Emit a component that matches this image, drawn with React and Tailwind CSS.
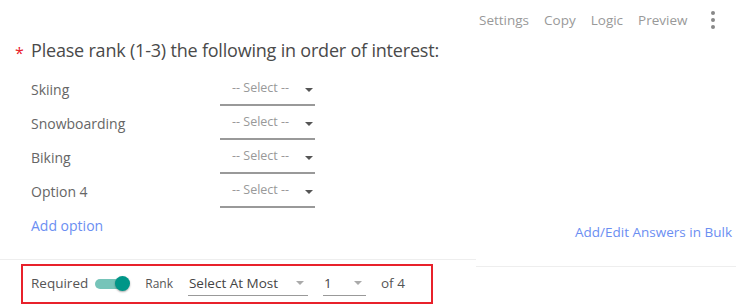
import React from "react";

const Caret = ({ cls = "border-t-[#555]" }) => (
  <span className={`inline-block w-0 h-0 border-l-[4px] border-r-[4px] border-t-[4px] border-l-transparent border-r-transparent ${cls}`} />
);

const options = ["Skiing", "Snowboarding", "Biking", "Option 4"];

export default function App() {
  return (
    <div
      className="w-[754px] h-[306px] bg-white overflow-hidden"
      style={{ fontFamily: '"Open Sans", "Noto Sans", sans-serif' }}
    >
      <div className="flex items-start">
        {/* left column */}
        <div className="w-[476px] flex flex-col">
          <div className="h-[260px] border-b border-[#eeeeee] flex flex-col">
            <div className="flex items-center mt-[38px] h-[24px]">
              <span className="ml-[15px] w-[16px] text-[#e8212b] text-[16px] leading-none mt-[6px]">*</span>
              <span className="text-[18px] text-[#4a4a4a] tracking-[-0.2px]">
                Please rank (1-3) the following in order of interest:
              </span>
            </div>
            <div className="flex flex-col pl-[31px] mt-[10px]">
              {options.map((o) => (
                <div key={o} className="flex items-center h-[34px]">
                  <span className="w-[189px] text-[14px] text-[#666]">{o}</span>
                  <div className="w-[95px] h-[33px] border-b-2 border-[#999] flex items-center pl-[12px] pr-[2px]">
                    <span className="text-[12.5px] text-[#999] flex-1">-- Select --</span>
                    <Caret cls="border-t-[#555] mt-[4px]" />
                  </div>
                </div>
              ))}
            </div>
            <div className="pl-[31px] mt-[7px] text-[14px] text-[#6b8ef2]">Add option</div>
          </div>
          {/* footer */}
          <div className="ml-[21px] mt-[4px] w-[412px] h-[40px] border-2 border-[#e8212b] flex items-center pl-[8px] pb-[1px]">
            <span className="text-[13.5px] text-[#555]">Required</span>
            <div className="ml-[7px] relative w-[35px] h-[15px] flex items-center">
              <div className="w-[34px] h-[10px] rounded-full bg-[#76c4b9]" />
              <div className="absolute right-0 w-[15px] h-[15px] rounded-full bg-[#009688] shadow-[0_1px_2px_rgba(0,0,0,0.35)]" />
            </div>
            <span className="ml-[15px] text-[12px] text-[#555]">Rank</span>
            <div className="ml-[15px] w-[120px] h-[24px] border-b border-[#999] flex items-center pl-[1px] pr-[4px]">
              <span className="flex-1 text-[13.5px] text-[#444]">Select At Most</span>
              <Caret cls="border-t-[#aaa]" />
            </div>
            <div className="ml-[15px] w-[43px] h-[24px] border-b border-[#999] flex items-center pl-[1px] pr-[4px]">
              <span className="flex-1 text-[13.5px] text-[#444]">1</span>
              <Caret cls="border-t-[#aaa]" />
            </div>
            <span className="ml-[15px] text-[13.5px] text-[#555]">of 4</span>
          </div>
        </div>
        {/* right column */}
        <div className="w-[260px] h-[267px] border-b border-[#eeeeee] flex flex-col">
          <div className="flex items-center h-[26px] mt-[7px] text-[13.5px] text-[#999]">
            <span className="ml-[3px]">Settings</span>
            <span className="ml-[15px]">Copy</span>
            <span className="ml-[15px]">Logic</span>
            <span className="ml-[15px]">Preview</span>
            <span className="ml-[23px] flex flex-col gap-[3px]">
              <span className="w-[4px] h-[4px] rounded-full bg-[#888]" />
              <span className="w-[4px] h-[4px] rounded-full bg-[#888]" />
              <span className="w-[4px] h-[4px] rounded-full bg-[#888]" />
            </span>
          </div>
          <div className="flex-1" />
          <div className="text-right pr-[4px] mb-[24px] text-[13.5px] text-[#6b8ef2]">Add/Edit Answers in Bulk</div>
        </div>
      </div>
    </div>
  );
}
